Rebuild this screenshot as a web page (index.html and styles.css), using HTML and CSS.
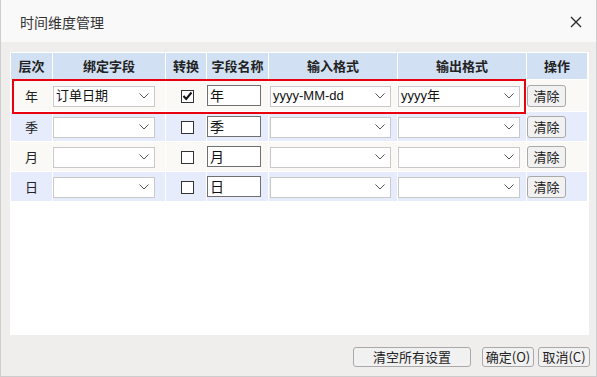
FILE: index.html
```html
<!doctype html>
<html>
<head>
<meta charset="UTF-8">
<title>时间维度管理</title>
<link rel="stylesheet" href="styles.css">
</head>
<body>
<div class="dialog">
  <div class="titlebar">
    <span class="title">时间维度管理</span>
    <svg class="close" width="12" height="12" viewBox="0 0 12 12"><path d="M1 1 L11 11 M11 1 L1 11" stroke="#2b2b2b" stroke-width="1.4" fill="none"/></svg>
  </div>

  <div class="content">
    <div class="panel">
      <table class="grid">
        <colgroup>
          <col style="width:41px"><col style="width:112px"><col style="width:40px"><col style="width:61px">
          <col style="width:128px"><col style="width:128px"><col style="width:60px">
        </colgroup>
        <thead>
          <tr><th>层次</th><th>绑定字段</th><th>转换</th><th>字段名称</th><th>输入格式</th><th>输出格式</th><th>操作</th></tr>
        </thead>
        <tbody>
          <tr class="odd first">
            <td class="center">年</td>
            <td><span class="select field">订单日期<svg class="chev" width="10" height="6" viewBox="0 0 10 6"><polyline points="0.5,0.5 5,5 9.5,0.5"/></svg></span></td>
            <td class="center"><span class="check"><svg width="11" height="11" viewBox="0 0 11 11"><polyline points="1.5,5 4.2,8 9.5,1.5"/></svg></span></td>
            <td><span class="name">年</span></td>
            <td><span class="select fmt-in">yyyy-MM-dd<svg class="chev" width="10" height="6" viewBox="0 0 10 6"><polyline points="0.5,0.5 5,5 9.5,0.5"/></svg></span></td>
            <td><span class="select fmt-out">yyyy年<svg class="chev" width="10" height="6" viewBox="0 0 10 6"><polyline points="0.5,0.5 5,5 9.5,0.5"/></svg></span></td>
            <td><button class="btn clear">清除</button></td>
          </tr>
          <tr class="even">
            <td class="center">季</td>
            <td><span class="select field"><svg class="chev" width="10" height="6" viewBox="0 0 10 6"><polyline points="0.5,0.5 5,5 9.5,0.5"/></svg></span></td>
            <td class="center"><span class="check"></span></td>
            <td><span class="name">季</span></td>
            <td><span class="select fmt-in"><svg class="chev" width="10" height="6" viewBox="0 0 10 6"><polyline points="0.5,0.5 5,5 9.5,0.5"/></svg></span></td>
            <td><span class="select fmt-out"><svg class="chev" width="10" height="6" viewBox="0 0 10 6"><polyline points="0.5,0.5 5,5 9.5,0.5"/></svg></span></td>
            <td><button class="btn clear">清除</button></td>
          </tr>
          <tr class="odd">
            <td class="center">月</td>
            <td><span class="select field"><svg class="chev" width="10" height="6" viewBox="0 0 10 6"><polyline points="0.5,0.5 5,5 9.5,0.5"/></svg></span></td>
            <td class="center"><span class="check"></span></td>
            <td><span class="name">月</span></td>
            <td><span class="select fmt-in"><svg class="chev" width="10" height="6" viewBox="0 0 10 6"><polyline points="0.5,0.5 5,5 9.5,0.5"/></svg></span></td>
            <td><span class="select fmt-out"><svg class="chev" width="10" height="6" viewBox="0 0 10 6"><polyline points="0.5,0.5 5,5 9.5,0.5"/></svg></span></td>
            <td><button class="btn clear">清除</button></td>
          </tr>
          <tr class="even">
            <td class="center">日</td>
            <td><span class="select field"><svg class="chev" width="10" height="6" viewBox="0 0 10 6"><polyline points="0.5,0.5 5,5 9.5,0.5"/></svg></span></td>
            <td class="center"><span class="check"></span></td>
            <td><span class="name">日</span></td>
            <td><span class="select fmt-in"><svg class="chev" width="10" height="6" viewBox="0 0 10 6"><polyline points="0.5,0.5 5,5 9.5,0.5"/></svg></span></td>
            <td><span class="select fmt-out"><svg class="chev" width="10" height="6" viewBox="0 0 10 6"><polyline points="0.5,0.5 5,5 9.5,0.5"/></svg></span></td>
            <td><button class="btn clear">清除</button></td>
          </tr>
        </tbody>
      </table>
      <!-- highlight around the first row -->
      <div class="highlight"></div>
    </div>
  </div>

  <div class="footer">
    <button class="btn reset">清空所有设置</button>
    <button class="btn ok">确定(O)</button>
    <button class="btn cancel">取消(C)</button>
  </div>
</div>
</body>
</html>
```

FILE: styles.css
```css
html, body {
	margin:0;
	background:#fff;
}

body {
	font-family: "Liberation Sans", "Noto Sans CJK SC", sans-serif;
	font-size:13px;
	color:#222;
}

.dialog {
	width:597px;
	height:377px;
	box-sizing:border-box;
	border:1px solid #cdcdcd;
	border-top:none;
	background:#efeeec;
	display:flex;
	flex-direction:column;
}

.titlebar {
	height:42px;
	flex:none;
	background:#f9f9f9;
	display:flex;
	align-items:center;
	justify-content:space-between;
	padding:0 14px 0 19px;
	box-sizing:border-box;
}

.title {
	font-family: "Noto Sans CJK SC", sans-serif;
	font-size:14px;
	color:#333;
	line-height:20px;
	margin-top:1px;
}

.close {
	display:block;
	margin-top:2px;
}

.content {
	padding:10px 7px 0 9px;
}

/* The white box holding the grid */
.panel {
	position:relative;
	height:283px;
	background:#fff;
}

.grid {
	border-collapse:separate;
	border-spacing:1px;
	table-layout:fixed;
	width:578px;
}

.grid th {
	height:26px;
	padding:0;
	background:#d1e0f2;
	font-family: "Noto Sans CJK SC", sans-serif;
	font-size:13px;
	font-weight:bold;
	color:#222;
	line-height:16px;
}

.grid td {
	height:29px;
	padding:0;
	font-family: "Noto Sans CJK SC", sans-serif;
	font-size:13px;
	line-height:16px;
	vertical-align:middle;
}

.grid tr.first td {
	height:31px;
}

.grid td.center {
	text-align:center;
}

tr.odd td {
	background:#faf9f5;
}

tr.even td {
	background:#e6ecfc;
}

.select {
	display:flex;
	align-items:center;
	justify-content:space-between;
	height:21px;
	box-sizing:border-box;
	border:1px solid #c9c9c9;
	background:#fff;
	padding:0 5px 0 2px;
	font-family: "Liberation Sans", "Noto Sans CJK SC", sans-serif;
	font-size:13px;
	color:#111;
	margin-top:1px;
}

.select .chev {
	margin-left:auto;
	fill:none;
	stroke:#555;
	stroke-width:1;
}

.select.field {
	width:102px;
}

.select.fmt-in {
	width:121px;
	margin-left:1px;
}

.select.fmt-out {
	width:122px;
}

.check {
	display:inline-flex;
	align-items:center;
	justify-content:center;
	width:13px;
	height:13px;
	box-sizing:border-box;
	border:1px solid #333;
	background:#fff;
	vertical-align:middle;
	margin-left:3px;
}

.check svg {
	fill:none;
	stroke:#111;
	stroke-width:2;
}

.name {
	display:block;
	width:54px;
	height:21px;
	box-sizing:border-box;
	border:1px solid #707070;
	background:#fff;
	padding-left:2px;
	font-size:14px;
	line-height:19px;
	color:#111;
}

.btn {
	font-family: "Noto Sans CJK SC", sans-serif;
	font-size:13px;
	color:#222;
	background:#f1f1f1;
	border:1px solid #a9a9a9;
	border-radius:3px;
	padding:0;
	line-height:16px;
	cursor:pointer;
}

.btn.clear {
	display:block;
	width:39px;
	height:22px;
}

/* red outline over the first row */
.highlight {
	position:absolute;
	left:2px;
	top:27px;
	width:514px;
	height:35px;
	box-sizing:border-box;
	border:2px solid #e8000f;
}

.footer {
	display:flex;
	justify-content:flex-end;
	align-items:center;
	margin-top:12px;
	padding-right:6px;
}

.footer .btn {
	height:20px;
}

.btn.reset {
	width:118px;
	margin-right:11px;
}

.btn.ok {
	width:52px;
	margin-right:4px;
}

.btn.cancel {
	width:52px;
}
```
